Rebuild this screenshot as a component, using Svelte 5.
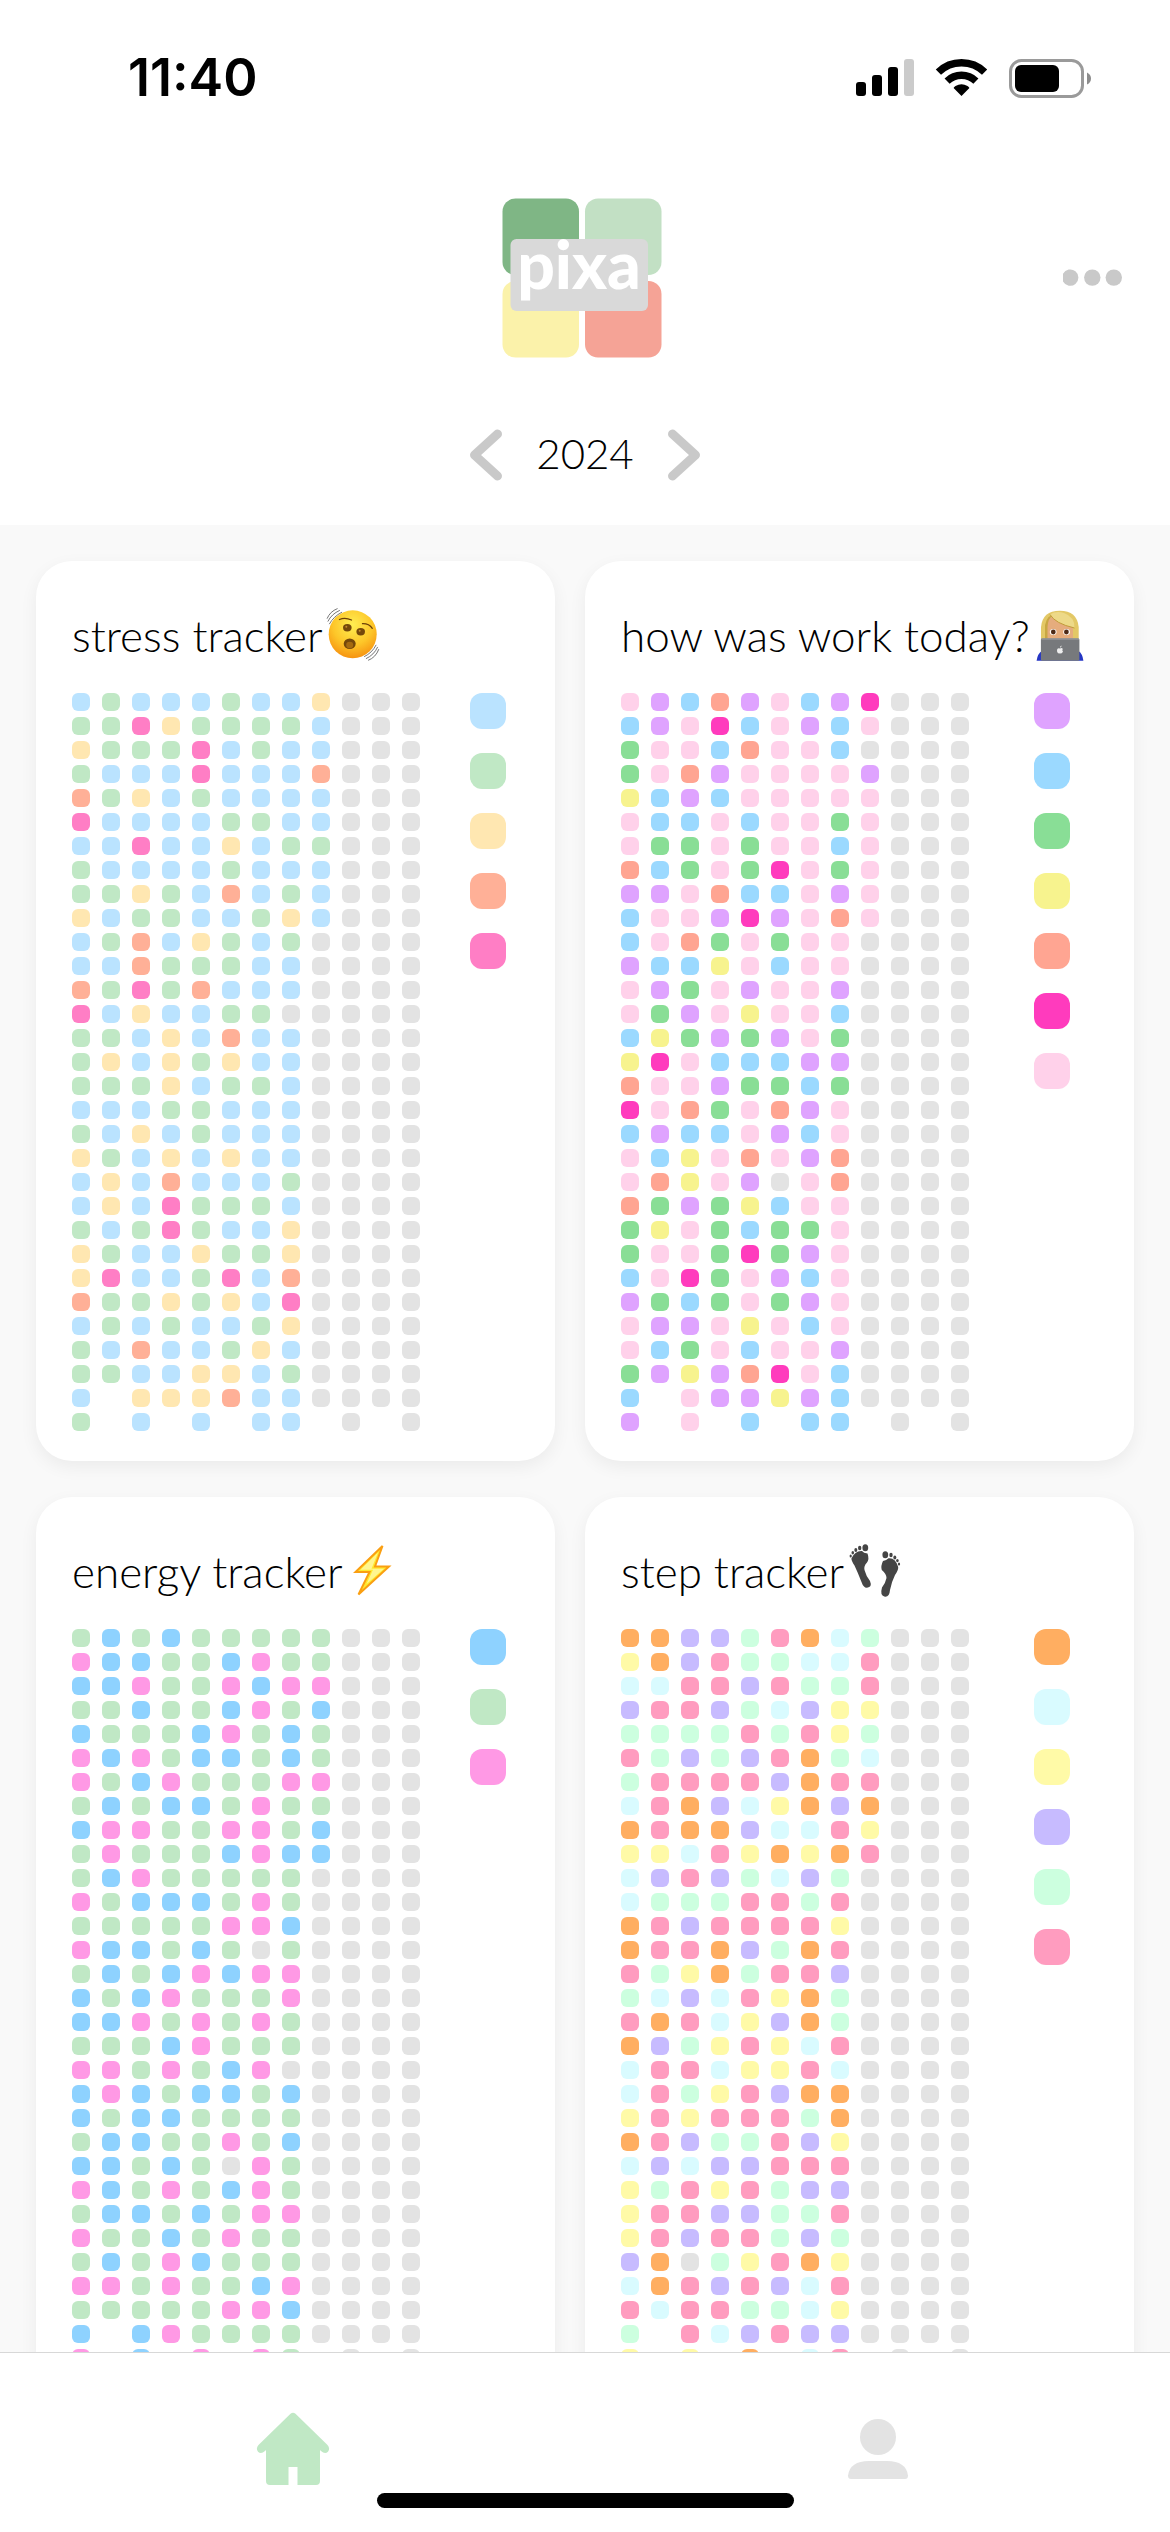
<script>
  const monthLengths = [31, 29, 31, 30, 31, 30, 31, 31, 30, 31, 30, 31];
  const emptyColor = '#e3e3e3';

  // One string per day of the month, one letter per month; "." is a day without an entry.
  const trackers = [
    {
      title: 'stress tracker',
      icon: 'face',
      palette: { b: '#bae3ff', g: '#c0e8c5', y: '#ffe7b1', o: '#ffb097', p: '#ff7ec5' },
      days: [
        'bgbbbgbby', 'ggpyggggb', 'ygggpbgbb', 'gbbbpbbbo', 'ogybgbbbb', 'pbbbbggbb', 'bbpbbybgg',
        'gbbbbgbbb', 'ggygbobgb', 'ybggbbgyb', 'bgobygbg', 'bbogggbb', 'ogpgobbb', 'pbybbgg.',
        'ggbybobb', 'gybygybb', 'gggybggb', 'bbbggbbb', 'gbybgbbb', 'ygbybybb', 'bybobbbg',
        'bybpgggb', 'gbgpgbby', 'ygbbyggy', 'ypbbgpbo', 'oggygybp', 'bgbgbbgy', 'gbobbgyb',
        'ggbbyybg', 'b.yyyobb', 'g.b.b.bb'
      ]
    },
    {
      title: 'how was work today?',
      icon: 'coder',
      palette: { v: '#dfa3ff', b: '#9bd9ff', g: '#89de96', y: '#f7f38e', o: '#ffa592', m: '#ff3bbd', p: '#ffd1ea' },
      days: [
        'pvbovpbvm', 'bvpmbpvbp', 'gppboppb.', 'gpovppppv', 'ybvbppppp', 'pbbpbppgp', 'pggpgppbp',
        'obgpgmpgp', 'vvpobbpvp', 'bppvmvpop', 'bpogpgpp', 'vbbypbpp', 'pvgpvppv', 'pgvpyppb',
        'bygvgvpg', 'ympbbbvv', 'oppvggbg', 'mpogpovp', 'bvbbpvbp', 'pbypopvo', 'poypv.po',
        'ogvgybpp', 'gypgbggp', 'gppgmgvp', 'bpmgpvbp', 'vgbgpgvp', 'pvvpypbp', 'pbgpbppv',
        'gvyvompb', 'b.pvvyvb', 'v.p.b.bb'
      ]
    },
    {
      title: 'energy tracker',
      icon: 'bolt',
      palette: { b: '#8ed2ff', g: '#c0e8c5', p: '#ff99e5' },
      days: [
        'gbgbggggg', 'pbbggbpgg', 'bbpggpbpp', 'ggbggbpgb', 'bgggbpgbg', 'pbpgbbgbg', 'pgbpgggpp',
        'gbgbbgpgg', 'bppggppgb', 'gpgggbpbb', 'gbpggggg', 'pgbbbgpg', 'gggggppb', 'pbbgbg.g',
        'gbgbpbpp', 'bgbpgggp', 'bbpgpgpg', 'gggbpggg', 'ppgpgbp.', 'bpbgbbgb', 'bgbbgggg',
        'gbbggpgb', 'bbgbg.pg', 'pbgpgbpg', 'gbbgbgpp', 'pggbgpgg', 'gbgpbggg', 'ppgpggbp',
        'gggggppb', 'b.bpgggg', 'p.b.p.pg'
      ]
    },
    {
      title: 'step tracker',
      icon: 'feet',
      palette: { o: '#ffae61', c: '#d9fbff', y: '#fffaa7', v: '#c7bbff', g: '#ccffdf', p: '#ff9cbf' },
      days: [
        'oovvgpocg', 'yovpggccp', 'ccppvpggp', 'vppvgcvyy', 'ggggpgpyg', 'pgvgvpogc', 'gppppvopp',
        'cpovcyovo', 'opoovccpy', 'yycpyoyop', 'cvpvgcvg', 'cgggppgp', 'opvppppy', 'oppovgop',
        'pgyogppv', 'gcvcpyog', 'popcyvog', 'ovgypycp', 'cppcyypc', 'cpgypvoo', 'ypypppgo',
        'opvggpvy', 'cvcvvppp', 'ygpypgvv', 'yppvvggp', 'ypvppgvg', 'vo.gypoy', 'copvpvcp',
        'pcppggcy', 'g.pcvpvv', 'y.y.o.cp'
      ]
    }
  ];

  let year = $state(2024);
</script>

<div class="screen">
  <header>
    <div class="status">
      <span class="time">11:40</span>
      <div class="indicators">
        <svg width="58" height="38" viewBox="0 0 58 38" aria-hidden="true">
          <rect x="0" y="23" width="10" height="14" rx="3" />
          <rect x="16" y="16" width="10" height="21" rx="3" />
          <rect x="32" y="8" width="10" height="29" rx="3" />
          <rect x="48" y="0" width="10" height="37" rx="3" fill="#cbcbcb" />
        </svg>
        <svg width="51" height="38" viewBox="0 0 51 38" fill="none" stroke="#000" aria-hidden="true">
          <path d="M2.4 13.1A33.2 33.2 0 0 1 48.6 13.1" stroke-width="7.5" />
          <path d="M11.1 22.1A20.7 20.7 0 0 1 39.9 22.1" stroke-width="7.3" />
          <path d="M25.5 37L17.6 29Q18 27.600 19.500 26.900A13 13 0 0 1 31.500 26.900Q33 27.600 33.400 29Z" fill="#000" stroke="none" />
        </svg>
        <svg width="82" height="39" viewBox="0 0 82 39" aria-hidden="true">
          <rect x="1.500" y="1.500" width="72" height="36" rx="11" fill="none" stroke="#9a9a9a" stroke-width="3" />
          <rect x="6" y="6" width="44" height="27" rx="6" />
          <path d="M78 13.500Q82 15.500 82 19.500T78 25.500Z" fill="#8c8c8c" />
        </svg>
      </div>
    </div>

    <div class="toolbar">
      <svg class="logo" width="166" height="160" viewBox="0 0 166 160">
        <rect x="0.500" y="0.500" width="76.500" height="76.500" rx="13" fill="#7fb685" />
        <rect x="83" y="0.500" width="76.500" height="76.500" rx="13" fill="#c2e0c4" />
        <rect x="0.500" y="83" width="76.500" height="76.500" rx="13" fill="#fbf2aa" />
        <rect x="83" y="83" width="76.500" height="76.500" rx="13" fill="#f5a396" />
        <rect x="8.500" y="41" width="137.500" height="72" rx="6" fill="#d9d9d9" />
        <text class="wordmark" x="77" y="91" text-anchor="middle">pixa</text>
      </svg>
      <button class="more" aria-label="More options">
        <svg width="60" height="18" viewBox="0 0 60 18" fill="#c9c9c9">
          <path d="M1 4.700A8.200 8.200 0 1 1 1 12.500Z" />
          <circle cx="30.300" cy="8.600" r="8.200" />
          <circle cx="51.800" cy="8.600" r="8.200" />
        </svg>
      </button>
    </div>

    <div class="years">
      <button aria-label="Previous year" onclick={() => (year -= 1)}>
        <svg width="34" height="52" viewBox="0 0 34 52"><path class="chevron" d="M28.500 5L5.500 26L28.500 47" /></svg>
      </button>
      <span class="year">{year}</span>
      <button aria-label="Next year" onclick={() => (year += 1)}>
        <svg width="34" height="52" viewBox="0 0 34 52"><path class="chevron" d="M5.500 5L28.500 26L5.500 47" /></svg>
      </button>
    </div>
  </header>

  <main>
    {#each trackers as tracker}
      <article>
        <h2>
          <span>{tracker.title}</span>
          {#if tracker.icon === 'face'}
            <svg width="54" height="54" viewBox="0 0 54 54" role="img" aria-label="shaking face">
              <defs>
                <radialGradient id="skin" cx=".5" cy=".3" r=".75">
                  <stop offset="0" stop-color="#ffee52" />
                  <stop offset=".55" stop-color="#fdc629" />
                  <stop offset="1" stop-color="#f58a0c" />
                </radialGradient>
              </defs>
              <g fill="none" stroke="#666" stroke-width="0.900" stroke-linecap="round">
                <path d="M1.200 12.300Q4 5.500 11.200 2.700M2 15.200Q5.500 8 13.500 4.500M3.500 17.800Q7.500 10.500 15.700 6.300" />
                <path d="M38.500 50.500Q46 47 50 39.200M40.300 52.500Q48 49 51.500 41.300M42.500 54.200Q49.700 51.500 52.700 43.500" />
              </g>
              <circle cx="26.700" cy="28.300" r="24" fill="url(#skin)" />
              <g fill="#75480a">
                <ellipse cx="21.300" cy="21.700" rx="4.300" ry="3.700" />
                <ellipse cx="34.700" cy="25.700" rx="4.300" ry="3.700" />
                <ellipse cx="23.700" cy="37.700" rx="6" ry="5.300" />
              </g>
              <ellipse cx="23.700" cy="39" rx="3.500" ry="3.200" fill="#a56a10" />
              <g fill="none" stroke="#6b3f08" stroke-width="1.300" stroke-linecap="round">
                <path d="M13.500 13.500Q19 11 25.500 14" />
                <path d="M36.500 17.700Q43 17.500 46.300 22.300" />
              </g>
              <g fill="#c58a2a">
                <circle cx="20.300" cy="20.700" r="1" />
                <circle cx="33.700" cy="24.700" r="1" />
              </g>
            </svg>
          {:else if tracker.icon === 'coder'}
            <svg width="54" height="54" viewBox="0 0 54 54" role="img" aria-label="woman technologist">
              <path d="M3.600 54.700Q4.500 47.500 9 45H45.500Q49.500 47.500 50.400 54.700Z" fill="#2536c4" />
              <path d="M8 34V21Q9.500 4.700 26.800 4.700T45.700 21V34Z" fill="#e3c866" />
              <path d="M12 34V19Q14 8 26 7Q16 13 15 34Z" fill="#c9a743" />
              <path d="M14.500 33V21Q15 12 20 9.500Q26 17 40 21V33Z" fill="#e5ac7d" />
              <path d="M17 8.500Q22 17.500 41.500 22Q42 11 31 7Q23 4.500 17 8.500Z" fill="#edd988" />
              <path d="M17 8.500Q22 17.500 41.500 22" fill="none" stroke="#bb9431" stroke-width="0.900" />
              <g fill="#fff">
                <ellipse cx="20.200" cy="26" rx="3.400" ry="3" />
                <ellipse cx="33.600" cy="26" rx="3.400" ry="3" />
              </g>
              <g fill="#4d2a17">
                <circle cx="20.300" cy="26" r="2.400" />
                <circle cx="33.400" cy="26" r="2.400" />
              </g>
              <rect x="7.900" y="32.300" width="38.500" height="22.400" rx="1.500" fill="#77797c" />
              <path d="M8.500 33H46" stroke="#a2a4a7" stroke-width="1" />
              <path d="M27 42.500Q29 41.500 29.800 43Q28.600 44.200 30 45.600Q28.800 48.300 27 47.300Q24.800 48.300 24 45.300Q23.800 41.500 27 42.500ZM27 41.800Q27 40 28.600 39.600Q28.600 41.500 27 41.800Z" fill="#eee" />
            </svg>
          {:else if tracker.icon === 'bolt'}
            <svg class="spaced" width="42" height="54" viewBox="0 0 42 54" role="img" aria-label="high voltage">
              <path d="M31.500 4L4.500 30H18.500L7.500 52.500L38 24.500H24Z" fill="#ffe92f" stroke="#fa9f12" stroke-width="2" stroke-linejoin="miter" />
              <path d="M27 10.500L9.500 27.700H22L15.500 42L33 26.700H20.500Z" fill="#fff690" />
            </svg>
          {:else}
            <svg width="54" height="54" viewBox="0 0 54 54" fill="#454545" role="img" aria-label="footprints">
              <ellipse cx="18.300" cy="5.700" rx="2.900" ry="3.500" />
              <ellipse cx="12.700" cy="6" rx="1.700" ry="2.300" />
              <ellipse cx="8.800" cy="8" rx="1.500" ry="2" />
              <ellipse cx="5.800" cy="10.700" rx="1.300" ry="1.700" />
              <ellipse cx="3.700" cy="14" rx="1.100" ry="1.500" />
              <path d="M4.400 16.500Q8 8.500 15 9Q16.500 11 20.500 11.500Q22.500 17 20 20.500Q16.500 24 17.500 28Q19 34 23 39Q25.500 45 20 45.800Q16.500 46 14.500 40Q11 31 7.500 23.500Q4.500 19 4.400 16.500Z" />
              <ellipse cx="38.300" cy="12.700" rx="2.900" ry="3.500" />
              <ellipse cx="44" cy="13" rx="1.700" ry="2.300" />
              <ellipse cx="47.800" cy="15.500" rx="1.500" ry="2" />
              <ellipse cx="50.400" cy="18.600" rx="1.300" ry="1.700" />
              <ellipse cx="52" cy="22" rx="1.100" ry="1.500" />
              <path d="M51.200 25Q48.500 15.500 41.500 16.300Q39.500 18.500 36 19Q33.500 24 34.800 28Q39.500 32 39.500 36Q38.500 41 35 45.500Q32.500 54 38 54.700Q42.500 55 43 48Q44.500 40 48 33Q51.500 28 51.200 25Z" />
            </svg>
          {/if}
        </h2>
        <div class="chart">
          <div class="days">
            {#each tracker.days as row, day}
              {#each monthLengths as length, month}
                {#if day < length}
                  <span class="cell" style:background={tracker.palette[row[month]] ?? emptyColor}></span>
                {:else}
                  <span></span>
                {/if}
              {/each}
            {/each}
          </div>
          <div class="legend">
            {#each Object.values(tracker.palette) as color}
              <span class="swatch" style:background={color}></span>
            {/each}
          </div>
        </div>
      </article>
    {/each}
  </main>

  <footer>
    <nav>
      <button aria-label="Home">
        <svg width="74" height="74" viewBox="0 0 74 74" fill="#c0e8c5">
          <path d="M34.500 1.700Q37 -0.300 39.500 1.700L71.500 33Q74.500 36.500 72 39.700Q69 42.500 65 39L64 38V69Q64 73 60 73H41.500V55H32.500V73H14Q10 73 10 69V38L9 39Q5 42.500 2 39.700Q-0.500 36.500 2.500 33Z" />
        </svg>
      </button>
      <button aria-label="Profile">
        <svg width="60" height="62" viewBox="0 0 60 62" fill="#e3e3e3">
          <circle cx="30" cy="19" r="18" />
          <path d="M0 57.500Q2 43 21 43H39Q58 43 60 57.500Q60 61 57 61H3Q0 61 0 57.500Z" />
        </svg>
      </button>
    </nav>
    <div class="home-indicator"></div>
  </footer>
</div>

<style>
  :global(body) {
    background: #fff;
  }

  .screen {
    display: flex;
    flex-direction: column;
    height: 100vh;
    background: #fff;
    color: #000;
    font-family: Lato, 'Open Sans', sans-serif;
  }

  svg {
    display: block;
    flex: none;
    overflow: visible;
  }

  button {
    display: flex;
    align-items: center;
    justify-content: center;
    margin: 0;
    padding: 0;
    border: 0;
    background: none;
    cursor: pointer;
  }

  header {
    flex: none;
    padding-bottom: 15px;
  }

  .status {
    display: flex;
    align-items: center;
    justify-content: space-between;
    height: 156px;
    padding: 0 79px 0 128px;
  }

  .time {
    font: 600 52px/60px Inter, 'Liberation Sans', sans-serif;
  }

  .indicators {
    display: flex;
    align-items: center;
    gap: 22px;
  }

  .toolbar {
    display: grid;
    grid-template-columns: 1fr auto 1fr;
    align-items: center;
    height: 244px;
    padding: 0 48px;
  }

  .logo {
    grid-column: 2;
  }

  .wordmark {
    fill: #fff;
    font-size: 66px;
    font-weight: 900;
  }

  .more {
    justify-self: end;
  }

  .years {
    display: flex;
    align-items: center;
    justify-content: center;
    gap: 33px;
    height: 110px;
  }

  .year {
    padding-bottom: 4px;
    font-size: 42px;
    font-weight: 300;
    line-height: 60px;
  }

  .chevron {
    fill: none;
    stroke: #c9c9c9;
    stroke-width: 9;
    stroke-linecap: round;
    stroke-linejoin: round;
  }

  main {
    flex: 1;
    min-height: 0;
    display: grid;
    grid-template-columns: 519fr 549fr;
    align-content: start;
    gap: 36px 30px;
    padding: 36px;
    overflow-y: auto;
    scrollbar-width: none;
    background: #f9f9f9;
  }

  article {
    padding: 42px 0 30px 36px;
    border-radius: 36px;
    background: #fff;
    box-shadow: 0 6px 18px rgba(0, 0, 0, 0.06);
  }

  h2 {
    display: flex;
    align-items: center;
    gap: 3px;
    height: 60px;
    margin: 0 0 30px;
    font-size: 44px;
    font-weight: 300;
    line-height: 60px;
    white-space: nowrap;
  }

  h2 span {
    padding-top: 4px;
  }

  .spaced {
    margin-left: 6px;
  }

  .chart {
    display: flex;
  }

  .days {
    display: grid;
    grid-template-columns: repeat(12, 18px);
    grid-auto-rows: 18px;
    gap: 6px 12px;
  }

  .cell {
    border-radius: 6px;
  }

  .legend {
    flex: 1;
    display: flex;
    flex-direction: column;
    align-items: center;
    gap: 24px;
  }

  .swatch {
    width: 36px;
    height: 36px;
    border-radius: 12px;
  }

  footer {
    flex: none;
    border-top: 1px solid #d8d8d8;
    background: #fff;
  }

  nav {
    display: grid;
    grid-template-columns: 1fr 1fr;
    height: 140px;
    padding-top: 52px;
    box-sizing: border-box;
  }

  .home-indicator {
    width: 417px;
    max-width: 60%;
    height: 15px;
    margin: 0 auto 24px;
    border-radius: 8px;
    background: #000;
  }
</style>
